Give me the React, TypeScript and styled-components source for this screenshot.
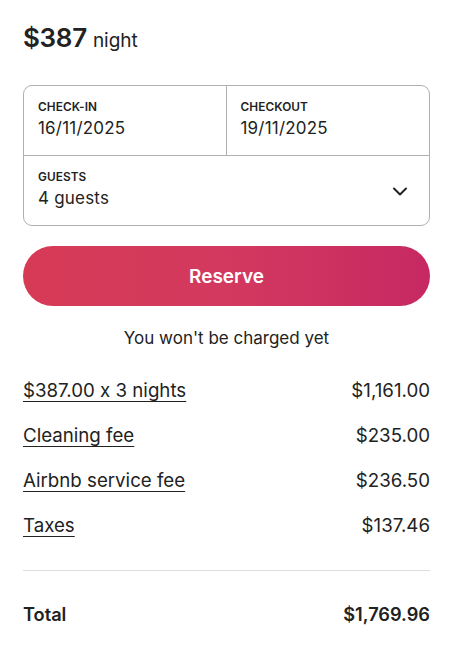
import React from "react";
import styled, { createGlobalStyle } from "styled-components";

const Global = createGlobalStyle`
  html, body { margin: 0; padding: 0; background: #fff; }
  body {
    font-family: Inter, "Noto Sans", sans-serif;
    color: #222;
    -webkit-font-smoothing: antialiased;
    font-feature-settings: "calt" 0;
  }
`;

const Page = styled.div`
  padding: 23px 24px 0 23px;
  display: flex;
  flex-direction: column;
`;

const PriceLine = styled.div`
  display: flex;
  align-items: baseline;
  gap: 6px;
  line-height: 30px;
`;

const Price = styled.span`
  font-size: 26px;
  font-weight: 600;
  letter-spacing: -0.3px;
`;

const Per = styled.span`
  font-size: 19px;
  font-weight: 400;
`;

const Box = styled.div`
  margin-top: 29px;
  border: 1px solid #b0b0b0;
  border-radius: 9px;
  display: flex;
  flex-direction: column;
`;

const DatesRow = styled.div`
  display: grid;
  grid-template-columns: 1fr 1fr;
  border-bottom: 1px solid #b0b0b0;
  height: 69px;
`;

const Cell = styled.div<{ $divider?: boolean }>`
  padding: 14px 14px 0 14px;
  border-right: ${(p) => (p.$divider ? "1px solid #b0b0b0" : "none")};
  display: flex;
  flex-direction: column;
  gap: 3px;
`;

const GuestRow = styled.div`
  display: flex;
  align-items: stretch;
  justify-content: space-between;
  height: 69px;
  padding-right: 21px;
`;

const ChevronWrap = styled.div`
  display: flex;
  align-items: center;
`;

const Label = styled.div`
  font-size: 11.8px;
  font-weight: 600;
  letter-spacing: 0.1px;
  line-height: 14px;
`;

const Value = styled.div`
  font-size: 17px;
  line-height: 22px;
  font-weight: 400;
  letter-spacing: 0.2px;
`;

const ReserveButton = styled.button`
  margin-top: 20px;
  height: 60px;
  border: none;
  border-radius: 30px;
  background: linear-gradient(90deg, #d63a55 0%, #d3395f 50%, #c62962 100%);
  color: #fff;
  font-family: inherit;
  font-size: 19px;
  font-weight: 600;
  cursor: pointer;
`;

const Note = styled.div`
  margin-top: 21px;
  text-align: center;
  font-size: 17px;
  line-height: 22px;
`;

const Lines = styled.div`
  margin-top: 31px;
  display: flex;
  flex-direction: column;
  gap: 23px;
`;

const Line = styled.div`
  display: flex;
  justify-content: space-between;
  align-items: center;
  font-size: 18.7px;
  line-height: 22px;
`;

const Link = styled.span`
  text-decoration: underline;
  text-underline-offset: 4px;
  text-decoration-thickness: 1px;
`;

const Divider = styled.div`
  margin-top: 33px;
  height: 1px;
  background: #dddddd;
`;

const TotalLine = styled(Line)`
  margin-top: 32px;
  font-size: 18.2px;
  font-weight: 600;
`;

const rows = [
  ["$387.00 x 3 nights", "$1,161.00"],
  ["Cleaning fee", "$235.00"],
  ["Airbnb service fee", "$236.50"],
  ["Taxes", "$137.46"],
];

export default function App() {
  return (
    <>
      <Global />
      <Page>
        <PriceLine>
          <Price>$387</Price>
          <Per>night</Per>
        </PriceLine>
        <Box>
          <DatesRow>
            <Cell $divider>
              <Label>CHECK-IN</Label>
              <Value>16/11/2025</Value>
            </Cell>
            <Cell>
              <Label>CHECKOUT</Label>
              <Value>19/11/2025</Value>
            </Cell>
          </DatesRow>
          <GuestRow>
            <Cell>
              <Label>GUESTS</Label>
              <Value>4 guests</Value>
            </Cell>
            <ChevronWrap>
              <svg width="16" height="16" viewBox="0 0 32 32" fill="none" stroke="#222" strokeWidth="4" strokeLinecap="round" strokeLinejoin="round">
                <path d="M4 11l12 12 12-12" />
              </svg>
            </ChevronWrap>
          </GuestRow>
        </Box>
        <ReserveButton>Reserve</ReserveButton>
        <Note>You won't be charged yet</Note>
        <Lines>
          {rows.map(([a, b]) => (
            <Line key={a}>
              <Link>{a}</Link>
              <span>{b}</span>
            </Line>
          ))}
        </Lines>
        <Divider />
        <TotalLine>
          <span>Total</span>
          <span>$1,769.96</span>
        </TotalLine>
      </Page>
    </>
  );
}
